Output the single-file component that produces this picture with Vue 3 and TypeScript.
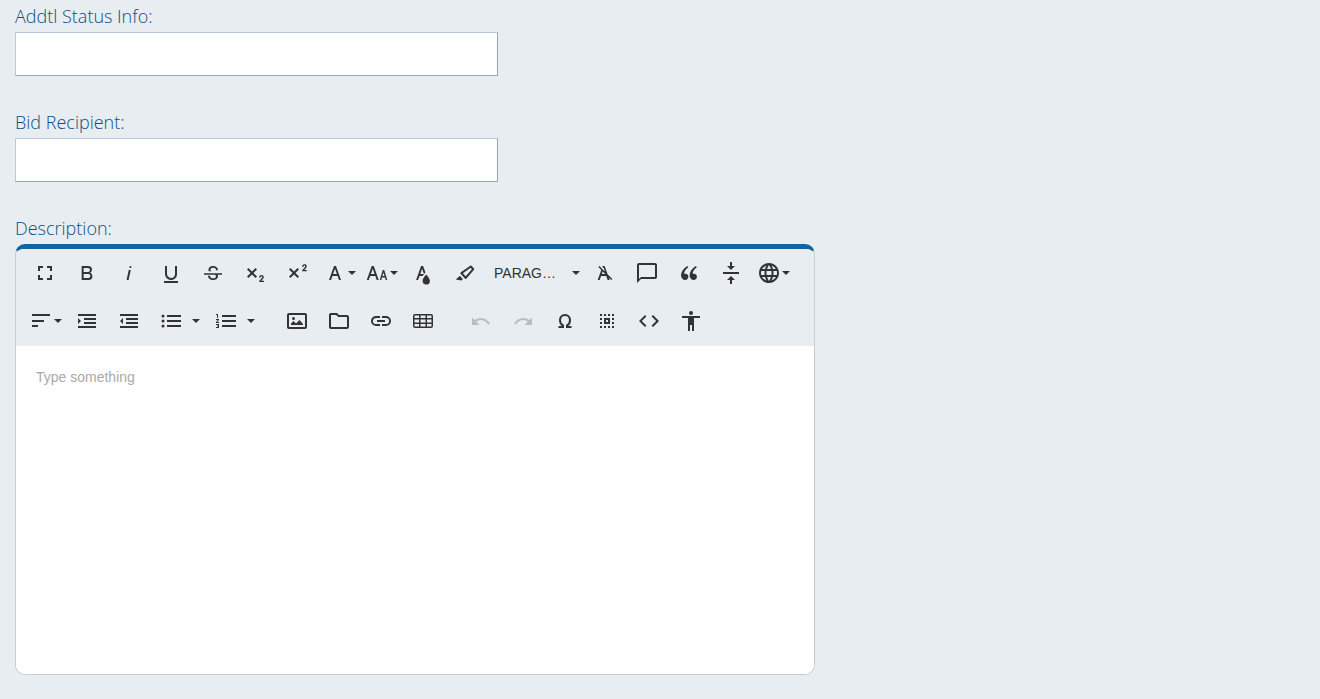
<script setup lang="ts">
import { ref } from 'vue'

interface Tool {
  name: string
  d?: string
  stroke?: string
  kind?: 'menu' | 'arrow' | 'format'
  disabled?: boolean
  gap?: boolean
}

const two =
  'l1.068-1.147c.196-.2.371-.407.537-.609.16-.194.304-.4.432-.617.12-.2.218-.412.293-.633.07-.215.106-.44.106-.666.003-.282-.049-.561-.153-.822a1.7 1.7 0 0 0-.45-.642 2 2 0 0 0-.721-.406 3.1 3.1 0 0 0-1.949.045 2.1 2.1 0 0 0-.763.495c-.21.208-.371.459-.475.735-.1.267-.153.548-.156.833l-.004.237h1.534l.007-.227c.001-.127.02-.253.054-.375a.9.9 0 0 1 .157-.294.7.7 0 0 1 .259-.184c.224-.089.473-.094.701-.015.083.036.156.09.215.157.061.072.108.154.138.243.036.109.054.222.055.336-.001.09-.012.179-.032.266-.03.104-.071.205-.124.3a3 3 0 0 1-.264.387c-.134.175-.277.343-.429.503l-2.156 2.353V21H21v-1.326z'

const rows: Tool[][] = [
  [
    { name: 'Fullscreen', d: 'M7 14H5v5h5v-2H7zM5 10h2V7h3V5H5zm12 7h-3v2h5v-5h-2zM14 5v2h3v3h2V5z' },
    { name: 'Bold', d: 'M15.25 11.8A3.68 3.68 0 0 0 17 9a3.93 3.93 0 0 0-3.86-4H6.65v14h7a3.74 3.74 0 0 0 3.7-3.78v-.12a3.64 3.64 0 0 0-2.1-3.3zM8.65 7h4.2a2.09 2.09 0 0 1 2 1.3 2.09 2.09 0 0 1-1.37 2.61 2.23 2.23 0 0 1-.63.09h-4.2zm4.6 10h-4.6v-4h4.6a2.09 2.09 0 0 1 2 1.3 2.09 2.09 0 0 1-1.37 2.61 2.23 2.23 0 0 1-.63.09z' },
    { name: 'Italic', d: 'M11.76 9h2l-2.2 10h-2zm1.68-4a1 1 0 1 0 1 1 1 1 0 0 0-1-1z' },
    { name: 'Underline', d: 'M19 20v2H5v-2zm-3-6.785a4 4 0 0 1-5.74 3.4A3.75 3.75 0 0 1 8 13.085V5H6v8.215a6 6 0 0 0 8 5.44 5.851 5.851 0 0 0 4-5.65V5h-2z' },
    { name: 'Strikethrough', d: 'M3 12.203h18v1.5h-4.366a3.6 3.6 0 0 1 .35 1.593 3.252 3.252 0 0 1-1.315 2.7A5.55 5.55 0 0 1 12.203 19a6.44 6.44 0 0 1-2.624-.539 4.46 4.46 0 0 1-1.892-1.488 3.67 3.67 0 0 1-.67-2.156v-.113H9.02v.113a2.18 2.18 0 0 0 .854 1.831 3.69 3.69 0 0 0 2.329.679 3.39 3.39 0 0 0 2.076-.546 1.73 1.73 0 0 0 .702-1.467 1.7 1.7 0 0 0-.647-1.434 3 3 0 0 0-.275-.177H3zm13.345-5.143a4.18 4.18 0 0 0-1.721-1.514A5.63 5.63 0 0 0 12.11 5a5.16 5.16 0 0 0-3.363 1.062A3.36 3.36 0 0 0 7.44 8.769a3.23 3.23 0 0 0 .322 1.427h2.596c-.083-.053-.185-.105-.252-.16a1.6 1.6 0 0 1-.653-1.3 1.8 1.8 0 0 1 .688-1.511 3.13 3.13 0 0 1 1.97-.553 3.05 3.05 0 0 1 2.106.669 2.35 2.35 0 0 1 .736 1.833v.113h2.003v-.114a3.9 3.9 0 0 0-.611-2.113z' },
    { name: 'Subscript', d: 'M10.4 12l3.6 3.6-1.4 1.4L9 13.4 5.4 17 4 15.6 7.6 12 4 8.4 5.4 7 9 10.6 12.6 7 14 8.4zM18.312 19.674' + two },
    { name: 'Superscript', d: 'M10.4 12l3.6 3.6-1.4 1.4L9 13.4 5.4 17 4 15.6 7.6 12 4 8.4 5.4 7 9 10.6 12.6 7 14 8.4zM19.3 8.9' + two.replace('V21H21v-1.326z', 'v1.16h4.6v-1.326z') },
    { name: 'Font Family', kind: 'menu', d: 'M16 19h2L13 5h-2L6 19h2l1.43-4h5.15zm-5.86-6L12 7.8l1.86 5.2z' },
    { name: 'Font Size', kind: 'menu', d: 'M20.75 19h1.5l-3-10h-1.5l-3 10h1.5l.75-2.5h3zm-3.3-4l1.05-3.5L19.55 15zm-5.7 4h2l-5-14h-2l-5 14h2l1.43-4h5.15zm-5.86-6l1.86-5.2L9.61 13z' },
    { name: 'Text Color', d: 'M15.2 13.494s-3.6 3.9-3.6 6.3a3.65 3.65 0 0 0 7.3.1v-.1c0-2.4-3.7-6.3-3.7-6.3zm-1.47-1.357l.669-.724L12.1 5h-2l-5 14h2l1.43-4h2.943a24.426 24.426 0 0 1 2.253-2.863zM11.1 7.8l1.86 5.2H9.244z' },
    { name: 'Background Color', d: 'M9.918 12.241l7.747-5.39 1.18 1.296-6.094 7.207-2.833-3.113m-2.33.411l4.535 4.983a.934.934 0 0 0 1.395-.09l7.451-8.814a.908.908 0 0 0 .022-1.198l-2.513-2.761a.908.908 0 0 0-1.195-.092l-9.474 6.591a.934.934 0 0 0-.221 1.381zm-4.794 5.876l5.617.972 1.479-1.346-3.029-3.328z' },
    { name: 'Paragraph Format', kind: 'format' },
    { name: 'Clear Formatting', d: 'M11.48 10.09l-1.2-1.21L8.8 7.41 6.43 5 5.37 6.1 8.25 9 4.66 19h2l1.43-4h5.14l1.43 4h2l-.89-2.51L18.27 19l1.07-1.06-4.75-4.74L11.66 5h-2l-.3.85 1.2 1.2.1-.25 1.200 3.300zM8.8 13l.92-2.56L12.27 13z' },
    { name: 'Comment', d: 'M20 2H4c-1.1 0-2 .9-2 2v18l4-4h14c1.1 0 2-.9 2-2V4c0-1.1-.9-2-2-2zm0 14H6l-2 2V4h16z' },
    { name: 'Quote', d: 'M10.3 5l.95 1.3a12.9 12.9 0 0 0-3.1 3.1 5.5 5.5 0 0 0-1 3.1v.3l1.2-.1a2.87 2.87 0 0 1 2.15.85 2.84 2.84 0 0 1 .84 2.1 3.37 3.37 0 0 1-.9 2.45A3.14 3.14 0 0 1 8.1 19a3.4 3.4 0 0 1-2.73-1.28 4.9 4.9 0 0 1-1.3-3.33A9.4 9.4 0 0 1 5.5 9.4 15 15 0 0 1 10.3 5zm8.55 0l.95 1.3a12.9 12.9 0 0 0-3.1 3.1 5.5 5.5 0 0 0-1 3.1v.3l1.2-.1a2.87 2.87 0 0 1 2.15.85 2.84 2.84 0 0 1 .84 2.1 3.37 3.37 0 0 1-.9 2.45 3.14 3.14 0 0 1-2.34.9 3.4 3.4 0 0 1-2.73-1.28 4.9 4.9 0 0 1-1.3-3.33 9.4 9.4 0 0 1 1.43-4.99A15 15 0 0 1 18.85 5z' },
    { name: 'Page Break', d: 'M8 19h3v4h2v-4h3l-4-4zm8-14h-3V1h-2v4H8l4 4zM4 11v2h16v-2z' },
    { name: 'Language', kind: 'menu', d: 'M11.99 2C6.47 2 2 6.48 2 12s4.47 10 9.99 10C17.52 22 22 17.52 22 12S17.52 2 11.99 2zm6.93 6h-2.95a15.65 15.65 0 0 0-1.38-3.56A8.03 8.03 0 0 1 18.92 8zM12 4.04c.83 1.2 1.48 2.53 1.91 3.96h-3.82c.43-1.43 1.08-2.76 1.91-3.96zM4.26 14C4.1 13.36 4 12.69 4 12s.1-1.36.26-2h3.38c-.08.66-.14 1.32-.14 2s.06 1.34.14 2zm.82 2h2.95c.32 1.25.78 2.45 1.38 3.56A7.99 7.99 0 0 1 5.08 16zm2.95-8H5.08a7.99 7.99 0 0 1 4.33-3.56A15.65 15.65 0 0 0 8.03 8zM12 19.96c-.83-1.2-1.48-2.53-1.91-3.96h3.82c-.43 1.43-1.08 2.76-1.91 3.96zM14.34 14H9.66c-.09-.66-.16-1.32-.16-2s.07-1.35.16-2h4.68c.09.65.16 1.32.16 2s-.07 1.34-.16 2zm.25 5.56c.6-1.11 1.06-2.31 1.38-3.56h2.95a8.03 8.03 0 0 1-4.33 3.56zM16.36 14c.08-.66.14-1.32.14-2s-.06-1.34-.14-2h3.38c.16.64.26 1.31.26 2s-.1 1.36-.26 2z' },
  ],
  [
    { name: 'Align', kind: 'menu', d: 'M3 5h18v2H3zm0 6h12v2H3zm0 5h6v2H3z' },
    { name: 'Increase Indent', d: 'M3 5h18v2H3zm6 4h12v2H9zm0 4h12v2H9zm-6 4h18v2H3zm0-8v6l3-3z' },
    { name: 'Decrease Indent', d: 'M3 5h18v2H3zm6 4h12v2H9zm0 4h12v2H9zm-6 4h18v2H3zm3-8v6l-3-3z' },
    { name: 'Unordered List', d: 'M8 6h14v2H8zm0 5h14v2H8zm0 5h14v2H8zM4 5.5a1.5 1.5 0 1 0 0 3 1.5 1.5 0 0 0 0-3zm0 5a1.5 1.5 0 1 0 0 3 1.5 1.5 0 0 0 0-3zm0 5a1.5 1.5 0 1 0 0 3 1.5 1.5 0 0 0 0-3z' },
    { name: 'Unordered List Styles', kind: 'arrow' },
    { name: 'Ordered List', d: 'M8 6h14v2H8zm0 5h14v2H8zm0 5h14v2H8zM3 9h1V5H2v1h1zm-1 2h1.8L2 13.1v.9h3v-1H3.2L5 10.9V10H2zm0 5h2v.5H3v1h1v.5H2v1h3v-4H2z' },
    { name: 'Ordered List Styles', kind: 'arrow' },
    { name: 'Insert Image', gap: true, d: 'M20 4H4a2 2 0 0 0-2 2v12a2 2 0 0 0 2 2h16a2 2 0 0 0 2-2V6a2 2 0 0 0-2-2zm0 14H4V6h16zM8.5 8a1.5 1.5 0 1 0 0 3 1.5 1.5 0 0 0 0-3zM6 16v-1.5L8.5 12l2.5 2.5 3.5-3.5 3.5 4v1z' },
    { name: 'File Manager', d: 'M9.17 6l2 2H20v10H4V6h5.17M10 4H4c-1.1 0-2 .9-2 2v12c0 1.1.9 2 2 2h16c1.1 0 2-.9 2-2V8c0-1.1-.9-2-2-2h-8z' },
    { name: 'Insert Link', d: 'M3.9 12c0-1.71 1.39-3.1 3.1-3.1h4V7H7a5 5 0 0 0 0 10h4v-1.9H7A3.1 3.1 0 0 1 3.9 12zM8 13h8v-2H8zm9-6h-4v1.9h4a3.1 3.1 0 0 1 0 6.2h-4V17h4a5 5 0 0 0 0-10z' },
    { name: 'Insert Table', d: 'M20 5H4a2 2 0 0 0-2 2v10a2 2 0 0 0 2 2h16a2 2 0 0 0 2-2V7a2 2 0 0 0-2-2zM9.5 13.5v-3h5v3zm5 1.5v2.5h-5V15zm-5-6V6.5h5V9zm-6-2c0-.3.2-.5.5-.5h4V9H3.5zm0 3.5H8v3H3.5zm0 6.5v-2H8v2.5H4a.5.5 0 0 1-.5-.5zm17 0c0 .3-.2.5-.5.5h-4V15h4.5zm0-3.5H16v-3h4.5zM16 9V6.5h4c.3 0 .5.2.5.5v2z' },
    { name: 'Undo', gap: true, disabled: true, d: 'M11.6 9c-2.3 0-4.3.8-5.9 2.1L3 8.5V16h7.5l-3.2-3.2a6.8 6.8 0 0 1 4.3-1.7c3.2 0 5.9 1.7 7.5 4.3l1.9-1C19.1 11.2 15.6 9 11.6 9z' },
    { name: 'Redo', disabled: true, d: 'M12.4 9c2.3 0 4.3.8 5.9 2.1L21 8.5V16h-7.5l3.2-3.2a6.8 6.8 0 0 0-4.3-1.7c-3.2 0-5.9 1.7-7.5 4.3l-1.9-1C4.9 11.2 8.4 9 12.4 9z' },
    { name: 'Special Characters', stroke: 'M5.5 18H10v-1.5c-2-1-3-3-3-5.2C7 8.200 9 6 12 6s5 2.200 5 5.300c0 2.200-1 4.200-3 5.200V18h4.500' },
    { name: 'Select All', d: 'M5 5h2v2H5zm4 0h2v2H9zm4 0h2v2h-2zm4 0h2v2h-2zM5 9h2v2H5zm12 0h2v2h-2zM5 13h2v2H5zm12 0h2v2h-2zM5 17h2v2H5zm4 0h2v2H9zm4 0h2v2h-2zm4 0h2v2h-2zM9 9v6h6V9zm2 2h2v2h-2z' },
    { name: 'Code View', d: 'M9.4 16.6L4.8 12l4.6-4.600L8 6l-6 6 6 6zm5.200 0l4.600-4.600-4.600-4.600L16 6l6 6-6 6z' },
    { name: 'Accessibility', d: 'M12 2a2 2 0 1 1 0 4 2 2 0 0 1 0-4zM3 7h18v2h-6v13h-2v-6h-2v6H9V9H3z' },
  ],
]

const status = ref('')
const recipient = ref('')
const description = ref('')
const format = ref('paragraph')
</script>

<template>
  <form class="form" @submit.prevent>
    <div class="field">
      <label for="status">Addtl Status Info:</label>
      <input id="status" v-model="status" type="text" />
    </div>
    <div class="field">
      <label for="recipient">Bid Recipient:</label>
      <input id="recipient" v-model="recipient" type="text" />
    </div>
    <div class="field">
      <label for="description">Description:</label>
      <div class="editor">
        <div class="toolbar" role="toolbar" aria-label="Formatting">
          <div v-for="(row, r) in rows" :key="r" class="row">
            <template v-for="tool in row" :key="tool.name">
              <div v-if="tool.kind === 'format'" class="format">
                <select v-model="format" :aria-label="tool.name">
                  <option value="paragraph">PARAGRAPH FORMAT</option>
                </select>
                <span class="caret"></span>
              </div>
              <button
                v-else
                type="button"
                class="tool"
                :class="[tool.kind, { gap: tool.gap }]"
                :disabled="tool.disabled"
                :aria-label="tool.name"
              >
                <svg v-if="tool.kind !== 'arrow'" viewBox="0 0 24 24" aria-hidden="true">
                  <path v-if="tool.d" :d="tool.d" fill-rule="evenodd" />
                  <path v-if="tool.stroke" :d="tool.stroke" class="line" />
                </svg>
                <span v-if="tool.kind" class="caret"></span>
              </button>
            </template>
          </div>
        </div>
        <textarea id="description" v-model="description" placeholder="Type something"></textarea>
      </div>
    </div>
  </form>
</template>

<style>
body {
  background: #e8edf1;
}
</style>

<style scoped>
.form {
  display: flex;
  flex-direction: column;
  gap: 34px;
  padding: 4px 15px 24px;
  font-family: "Open Sans", Lato, sans-serif;
}
.field {
  display: flex;
  flex-direction: column;
  gap: 4px;
}
label {
  align-self: flex-start;
  color: #0c4f84;
  font-size: 18px;
  font-weight: 350;
  line-height: 24px;
}
input {
  box-sizing: border-box;
  width: 100%;
  max-width: 483px;
  height: 44px;
  padding: 0 10px;
  border: 1px solid;
  border-color: #b9c9da #98a7b5 #98a7b5 #b9c9da;
  border-radius: 0;
  outline: none;
  background: #fff;
  font: 16px "Liberation Sans", Arial, sans-serif;
}
.editor {
  box-sizing: border-box;
  width: 100%;
  max-width: 800px;
  overflow: hidden;
  border: 1px solid #ccc;
  border-top: 5px solid #1264a0;
  border-radius: 10px;
  background: #fff;
}
.toolbar {
  padding: 0 8px 1px;
  background: #e8edf1;
}
.row {
  display: flex;
  flex-wrap: wrap;
}
.tool {
  display: flex;
  align-items: center;
  justify-content: center;
  width: 38px;
  height: 40px;
  margin: 4px 2px;
  padding: 0;
  border: 0;
  background: none;
  color: #333;
}
.tool:disabled {
  color: #bdbdbd;
}
.tool.arrow {
  justify-content: flex-start;
  width: 13px;
  margin: 4px 0;
}
.tool.menu {
  gap: 1px;
}
.tool.gap {
  margin-left: 18px;
}
svg {
  width: 24px;
  height: 24px;
  fill: currentColor;
}
.line {
  fill: none;
  stroke: currentColor;
  stroke-width: 2;
}
.caret {
  flex: none;
  width: 0;
  height: 0;
  border: 4px solid transparent;
  border-top-color: #333;
  border-bottom: 0;
}
.format {
  display: flex;
  align-items: center;
  gap: 10px;
  width: 90px;
  height: 40px;
  margin: 4px 0 4px 8px;
}
select {
  width: 68px;
  padding: 0;
  overflow: hidden;
  border: 0;
  outline: none;
  appearance: none;
  background: none;
  color: #333;
  font: 14px "Liberation Sans", Arial, sans-serif;
  text-overflow: ellipsis;
  white-space: nowrap;
}
textarea {
  display: block;
  box-sizing: border-box;
  width: 100%;
  height: 328px;
  padding: 20px;
  border: 0;
  outline: none;
  resize: none;
  background: #fff;
  color: #333;
  font: 14px/22px "Liberation Sans", Arial, sans-serif;
}
textarea::placeholder {
  color: #aaa;
}
</style>
